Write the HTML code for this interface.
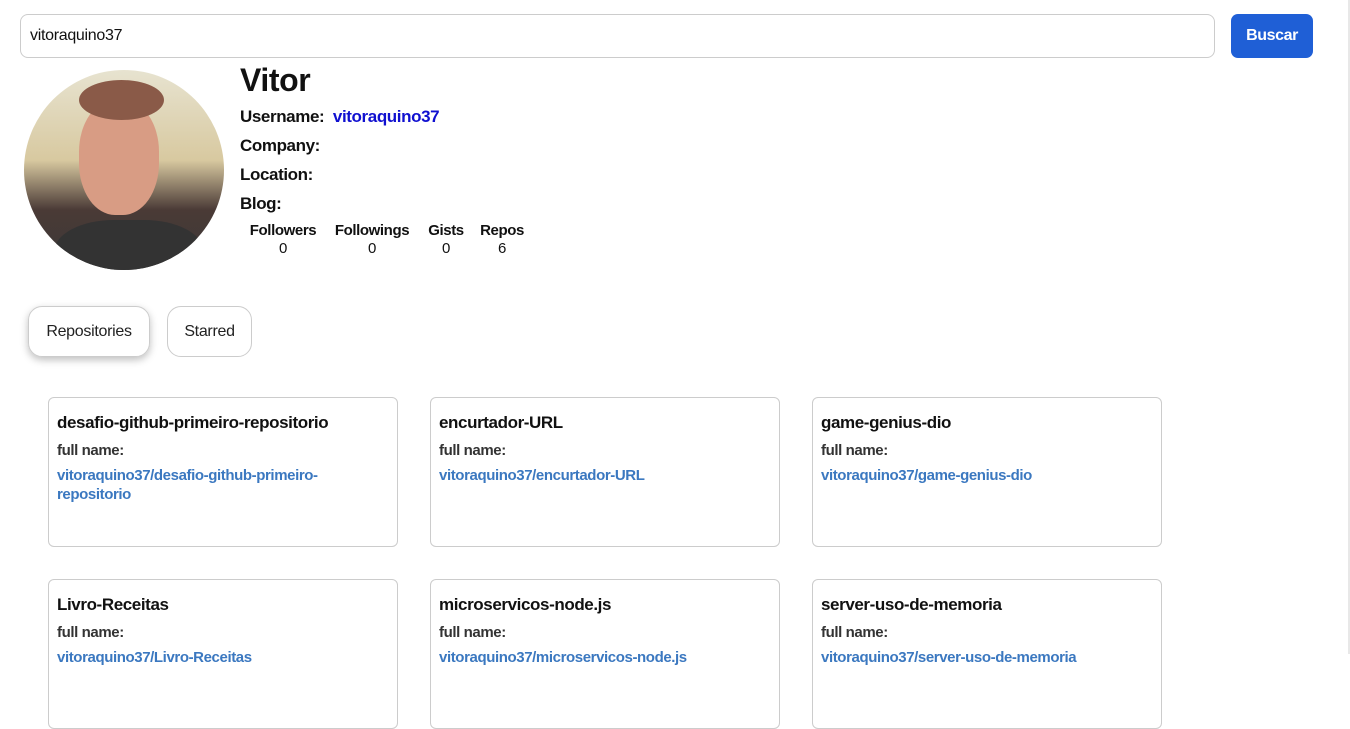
<!DOCTYPE html>
<html><head><style>
body{margin:0;width:1350px;height:654px;overflow:hidden;background:#fff;font-family:"Liberation Sans",Arial,sans-serif;position:relative}
.inp{position:absolute;left:20px;top:14px;width:1195px;height:44px;border:1px solid #ccc;border-radius:8px;font-size:16px;line-height:42px;padding-left:9px;box-sizing:border-box;color:#111;letter-spacing:-0.3px}
.btn{position:absolute;left:1231px;top:14px;width:82px;height:44px;background:#1f5fd6;border-radius:7px;color:#fff;font-weight:bold;font-size:16px;text-align:center;line-height:44px;letter-spacing:-0.4px}
.av{position:absolute;left:24px;top:70px;width:200px;height:200px;border-radius:50%;overflow:hidden;background:linear-gradient(#e7e3d0 0,#d8c9a0 45%,#4a3a36 70%,#3a3838 100%)}
.t{position:absolute;font-weight:bold;color:#111;letter-spacing:-0.4px}
.card{position:absolute;width:350px;height:150px;border:1px solid #ccc;border-radius:6px;box-sizing:border-box;padding:15px 8px;letter-spacing:-0.4px}
.card h3{margin:0;font-size:17px;color:#111}
.card .f{font-weight:bold;font-size:15px;color:#333;margin-top:9px}
.card .l{font-weight:bold;font-size:15px;color:#3b78c0;margin-top:7px;line-height:19px}
.tab{position:absolute;top:306px;height:51px;border:1px solid #ccc;border-radius:14px;box-sizing:border-box;font-size:16px;line-height:50px;text-align:center;color:#222;letter-spacing:-0.3px}
.s{position:absolute;top:222px;font-size:15px;text-align:center;width:100px;color:#111;letter-spacing:-0.4px;line-height:18px}
</style></head><body>
<div class="inp">vitoraquino37</div>
<div class="btn">Buscar</div>
<div class="av">
 <div style="position:absolute;left:55px;top:30px;width:80px;height:115px;border-radius:45%;background:#d89c84"></div>
 <div style="position:absolute;left:55px;top:10px;width:85px;height:40px;border-radius:50%;background:#8a5a48"></div>
 <div style="position:absolute;left:30px;top:150px;width:150px;height:80px;border-radius:40%;background:#333"></div>
</div>
<div class="t" style="left:240px;top:62px;font-size:32px">Vitor</div>
<div class="t" style="left:240px;top:107px;font-size:17px">Username:&nbsp; <span style="color:#1010d0">vitoraquino37</span></div>
<div class="t" style="left:240px;top:136px;font-size:17px">Company:</div>
<div class="t" style="left:240px;top:165px;font-size:17px">Location:</div>
<div class="t" style="left:240px;top:194px;font-size:17px">Blog:</div>
<div class="s" style="left:233px"><b>Followers</b><br>0</div>
<div class="s" style="left:322px"><b>Followings</b><br>0</div>
<div class="s" style="left:396px"><b>Gists</b><br>0</div>
<div class="s" style="left:452px"><b>Repos</b><br>6</div>
<div class="tab" style="left:28px;width:122px;box-shadow:0 3px 8px rgba(0,0,0,.25)">Repositories</div>
<div class="tab" style="left:167px;width:85px">Starred</div>
<div class="card" style="left:48px;top:397px"><h3>desafio-github-primeiro-repositorio</h3><div class="f">full name:</div><div class="l">vitoraquino37/desafio-github-primeiro-<br>repositorio</div></div>
<div class="card" style="left:430px;top:397px"><h3>encurtador-URL</h3><div class="f">full name:</div><div class="l">vitoraquino37/encurtador-URL</div></div>
<div class="card" style="left:812px;top:397px"><h3>game-genius-dio</h3><div class="f">full name:</div><div class="l">vitoraquino37/game-genius-dio</div></div>
<div class="card" style="left:48px;top:579px"><h3>Livro-Receitas</h3><div class="f">full name:</div><div class="l">vitoraquino37/Livro-Receitas</div></div>
<div class="card" style="left:430px;top:579px"><h3>microservicos-node.js</h3><div class="f">full name:</div><div class="l">vitoraquino37/microservicos-node.js</div></div>
<div class="card" style="left:812px;top:579px"><h3>server-uso-de-memoria</h3><div class="f">full name:</div><div class="l">vitoraquino37/server-uso-de-memoria</div></div>
<div style="position:absolute;left:1348px;top:0;width:2px;height:654px;background:#e8e8e8"></div>
</body></html>
